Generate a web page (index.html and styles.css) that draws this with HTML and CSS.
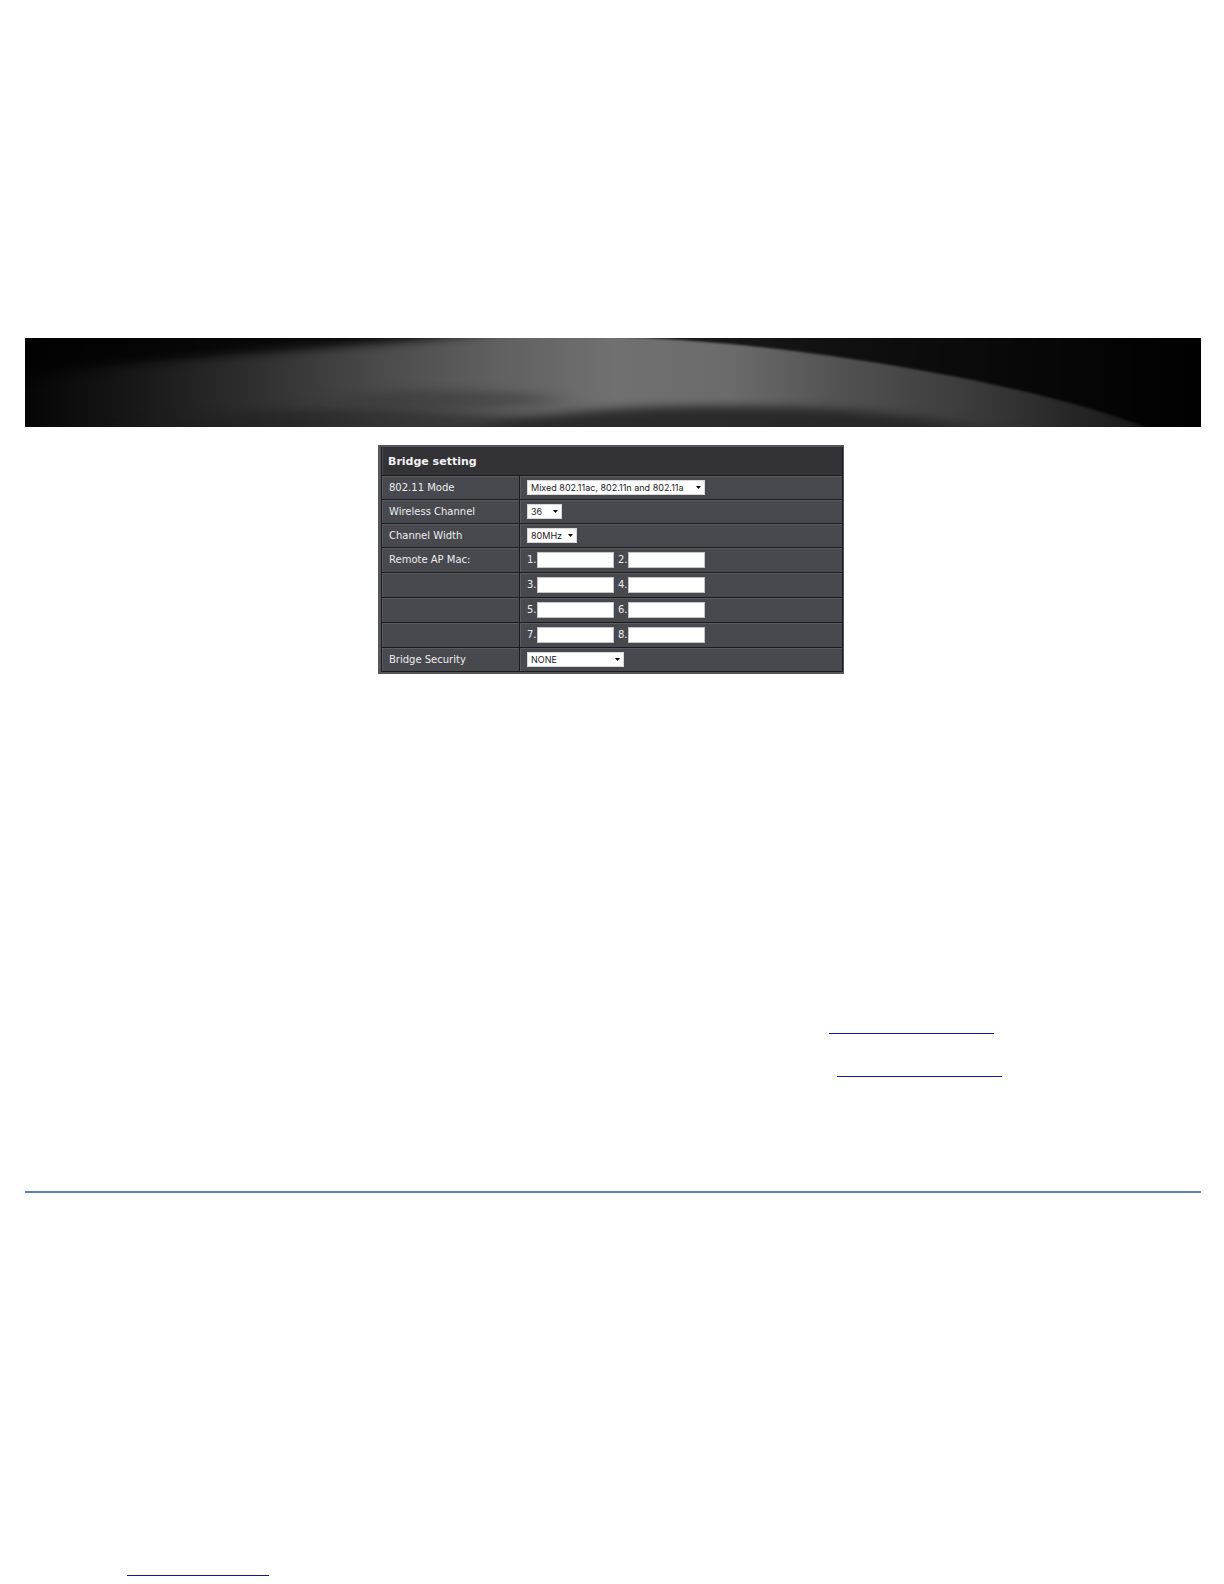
FILE: index.html
```
<!DOCTYPE html>
<html lang="en">
<head>
    <meta charset="UTF-8">
    <meta name="viewport" content="width=device-width, initial-scale=1.0">
    <title>Bridge setting</title>
    <link rel="stylesheet" href="styles.css">
</head>
<body>
    <div class="page">
        <svg class="banner" viewBox="0 0 1176 89" preserveAspectRatio="none" aria-hidden="true">
            <defs>
                <linearGradient id="base" x1="0" x2="1" y1="0" y2="0">
                    <stop offset="0" stop-color="#050505"/>
                    <stop offset="0.1" stop-color="#191919"/>
                    <stop offset="0.2" stop-color="#303030"/>
                    <stop offset="0.3" stop-color="#4a4a4a"/>
                    <stop offset="0.4" stop-color="#606060"/>
                    <stop offset="0.5" stop-color="#707070"/>
                    <stop offset="0.6" stop-color="#6b6b6b"/>
                    <stop offset="0.7" stop-color="#505050"/>
                    <stop offset="0.8" stop-color="#3c3c3c"/>
                    <stop offset="0.95" stop-color="#181818"/>
                </linearGradient>
                <linearGradient id="corner" x1="0" x2="1" y1="0" y2="0">
                    <stop offset="0" stop-color="#222"/>
                    <stop offset="0.5" stop-color="#0e0e0e"/>
                    <stop offset="1" stop-color="#000"/>
                </linearGradient>
                <filter id="soft" x="-20%" y="-50%" width="140%" height="200%" color-interpolation-filters="sRGB">
                    <feGaussianBlur stdDeviation="20 5"/>
                </filter>
                <filter id="edge" color-interpolation-filters="sRGB">
                    <feGaussianBlur stdDeviation="1"/>
                </filter>
            </defs>
            <rect width="1176" height="89" fill="url(#base)"/>
            <path d="M-40 -30 H560 C480 -4 400 2 320 8 C220 16 100 24 -40 44 Z" fill="#020202" opacity="0.85" filter="url(#soft)"/>
            <ellipse cx="420" cy="62" rx="110" ry="10" fill="#303030" opacity="0.45" filter="url(#soft)"/>
            <path d="M60 110 C160 66 280 64 520 80 V120 H60 Z" fill="#1c1c1c" opacity="0.5" filter="url(#soft)"/>
            <path d="M400 104 C520 68 620 68 720 68 C820 69 900 76 1020 104 V130 H400 Z" fill="#242424" opacity="0.9" filter="url(#soft)"/>
            <path d="M520 -4 C640 -1 720 6 800 17 C920 34 1040 58 1128 92 H1200 V-10 H520 Z" fill="url(#corner)" filter="url(#edge)"/>
        </svg>

        <form class="bridge-form">
            <table class="settings">
                <colgroup>
                    <col class="col-name">
                    <col>
                </colgroup>
                <tr>
                    <th class="title" colspan="2">Bridge setting</th>
                </tr>
                <tr>
                    <th><label for="mode">802.11 Mode</label></th>
                    <td>
                        <select id="mode" class="select-mode">
                            <option>Mixed 802.11ac, 802.11n and 802.11a</option>
                        </select>
                    </td>
                </tr>
                <tr>
                    <th><label for="channel">Wireless Channel</label></th>
                    <td>
                        <select id="channel" class="select-channel">
                            <option>36</option>
                        </select>
                    </td>
                </tr>
                <tr>
                    <th><label for="width">Channel Width</label></th>
                    <td>
                        <select id="width" class="select-width">
                            <option>80MHz</option>
                        </select>
                    </td>
                </tr>
                <tr class="mac-row">
                    <th>Remote AP Mac:</th>
                    <td>
                        <div class="macs">
                            <label for="mac1">1.</label><input type="text" id="mac1">
                            <label for="mac2">2.</label><input type="text" id="mac2">
                        </div>
                    </td>
                </tr>
                <tr class="mac-row">
                    <th></th>
                    <td>
                        <div class="macs">
                            <label for="mac3">3.</label><input type="text" id="mac3">
                            <label for="mac4">4.</label><input type="text" id="mac4">
                        </div>
                    </td>
                </tr>
                <tr class="mac-row">
                    <th></th>
                    <td>
                        <div class="macs">
                            <label for="mac5">5.</label><input type="text" id="mac5">
                            <label for="mac6">6.</label><input type="text" id="mac6">
                        </div>
                    </td>
                </tr>
                <tr class="mac-row">
                    <th></th>
                    <td>
                        <div class="macs">
                            <label for="mac7">7.</label><input type="text" id="mac7">
                            <label for="mac8">8.</label><input type="text" id="mac8">
                        </div>
                    </td>
                </tr>
                <tr>
                    <th><label for="security">Bridge Security</label></th>
                    <td>
                        <select id="security" class="select-security">
                            <option>NONE</option>
                        </select>
                    </td>
                </tr>
            </table>
        </form>

        <div class="links">
            <a href="#" class="link link-first"></a>
            <a href="#" class="link link-second"></a>
        </div>
        <hr class="rule">
        <a href="#" class="link link-footer"></a>
    </div>
</body>
</html>
```

FILE: styles.css
```
* {
    box-sizing: border-box;
}
body {
    margin: 0;
    background-color: white;
    font-family: "DejaVu Sans", Verdana, sans-serif;
    font-size: 10px;
}
.page {
    display: flex;
    flex-direction: column;
    padding: 338px 23px 8px 25px;
}
.banner {
    display: block;
    width: 100%;
    height: 89px;
}
.bridge-form {
    width: 470px;
    max-width: 100%;
    margin: 18px auto 0;
    padding-right: 4px;
}
.settings {
    width: 100%;
    table-layout: fixed;
    border-collapse: separate;
    border-spacing: 0;
    border: 2px solid #55565a;
    border-width: 2px 1px 2px 3px;
    background-color: #48494e;
    color: #ececee;
}
.col-name {
    width: 138px;
}
.settings th,
.settings td {
    height: 24px;
    padding: 0 7px;
    border-left: 1px solid #1b1b1f;
    border-bottom: 1px solid #1b1b1f;
    box-shadow: inset 1px 1px #5b5c61;
    font-weight: normal;
    text-align: left;
    vertical-align: middle;
    line-height: 14px;
}
.settings td,
.settings .title {
    border-right: 1px solid #1b1b1f;
}
.settings .title {
    height: 29px;
    padding: 2px 6px 0;
    background-color: #323237;
    box-shadow: inset 1px 0 #4a4b50;
    color: #f2f2f2;
    font-size: 11px;
    font-weight: bold;
}
.settings .mac-row th,
.settings .mac-row td {
    height: 25px;
}
select {
    display: block;
    height: 15px;
    padding: 0 3px;
    appearance: none;
    border: 1px solid #d8d8da;
    border-radius: 0;
    background: white url("data:image/svg+xml,%3Csvg xmlns='http://www.w3.org/2000/svg' width='5' height='3'%3E%3Cpath d='M0 0h5L2.5 3z'/%3E%3C/svg%3E") no-repeat right 3px center;
    color: #222;
    font-family: Inter, Arial, sans-serif;
    font-size: 9px;
    line-height: 13px;
}
.select-mode {
    width: 178px;
}
.select-channel {
    width: 35px;
}
.select-width {
    width: 50px;
}
.select-security {
    width: 97px;
}
.macs {
    display: flex;
    align-items: center;
}
.macs label {
    width: 10px;
}
.macs input {
    width: 77px;
    height: 16px;
    margin-right: 4px;
    padding: 0 2px;
    border: 1px solid #c4c4c8;
    background-color: white;
    font-size: 10px;
}
.links {
    display: flex;
    flex-direction: column;
    align-items: flex-end;
    margin-top: 340px;
}
.link {
    height: 20px;
    border-bottom: 1px solid #15159a;
}
.link-first {
    width: 165px;
    margin-right: 207px;
}
.link-second {
    width: 165px;
    margin: 23px 199px 0 0;
}
.link-footer {
    width: 142px;
    margin: 363px 0 0 102px;
}
.rule {
    width: 100%;
    height: 2px;
    margin: 114px 0 0;
    border: 0;
    background-color: #5b83b5;
}
```
